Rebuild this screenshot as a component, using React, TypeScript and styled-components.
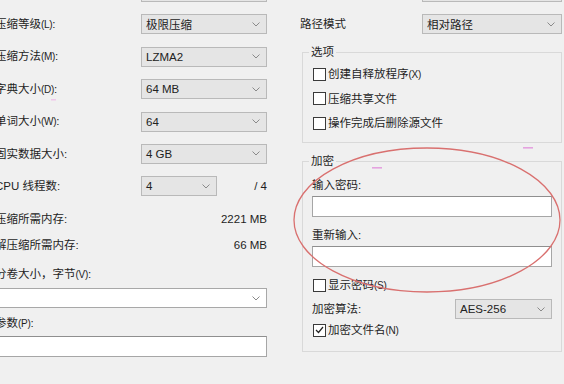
import { FC } from 'react';

import styled, { createGlobalStyle } from 'styled-components';

const GlobalStyle = createGlobalStyle`
  html, body {
    margin: 0;
    padding: 0;
    background: #f0f0f0;
  }
  body {
    font-family: "Liberation Sans", "Noto Sans CJK SC", sans-serif;
    font-size: 11.5px;
    color: #1e1e1e;
  }
`;

const Window = styled.div`
  width: 564px;
  height: 384px;
  position: relative;
  overflow: hidden;
  background: #f0f0f0;
  display: flex;
  align-items: flex-start;
`;

const LeftColumn = styled.div`
  width: 272px;
  margin-left: -5px;
  margin-top: -18px;
  display: flex;
  flex-direction: column;
`;

const RightColumn = styled.div`
  width: 262px;
  margin-left: 33px;
  margin-top: -18px;
  display: flex;
  flex-direction: column;
`;

const ComboStack = styled.div`
  display: flex;
  flex-direction: column;
  gap: 12.4px;
`;

const Row = styled.div<{ $top?: number }>`
  display: flex;
  align-items: center;
  justify-content: space-between;
  height: 20px;
  margin-top: ${(p) => p.$top ?? 0}px;
`;

const TextRow = styled.div<{ $top?: number }>`
  display: flex;
  align-items: center;
  justify-content: space-between;
  height: 16px;
  line-height: 16px;
  margin-top: ${(p) => p.$top ?? 0}px;
  white-space: nowrap;
`;

const Label = styled.span`
  white-space: nowrap;
  line-height: 16px;
`;

// the mnemonic part, e.g. "(L)", is set a bit narrower as in the original dialog
const Key = styled.span`
  font-size: 10px;
  letter-spacing: -0.3px;
`;

const Combo = styled.div<{ $width: number; $white?: boolean }>`
  box-sizing: border-box;
  width: ${(p) => p.$width}px;
  height: 20px;
  flex: none;
  display: flex;
  align-items: center;
  justify-content: space-between;
  padding: 0 6px 0 4px;
  background: ${(p) => (p.$white ? '#ffffff' : '#e5e5e5')};
  border: 1px solid ${(p) => (p.$white ? '#a8a8a8' : '#b9b9b9')};
  color: #222;
  white-space: nowrap;
`;

const TextBox = styled.div<{ $top?: number }>`
  box-sizing: border-box;
  height: 21px;
  width: 100%;
  margin-top: ${(p) => p.$top ?? 0}px;
  background: #ffffff;
  border: 1px solid #a6a6a6;
  border-top-color: #8f8f8f;
`;

const GroupBox = styled.fieldset<{ $top: number; $padTop: number; $padBottom: number }>`
  box-sizing: border-box;
  width: 260px;
  margin: ${(p) => p.$top}px 0 0 2px;
  padding: ${(p) => p.$padTop}px 9px ${(p) => p.$padBottom}px 9px;
  border: 1px solid #d9d9d9;
  display: flex;
  flex-direction: column;
  min-width: 0;
`;

const Legend = styled.legend`
  margin-left: -3px;
  padding: 0 2px;
  line-height: 16px;
  height: 16px;
`;

const CheckRow = styled.label<{ $top?: number }>`
  display: flex;
  align-items: center;
  gap: 2px;
  height: 16px;
  line-height: 16px;
  margin-left: 1px;
  margin-top: ${(p) => p.$top ?? 0}px;
  white-space: nowrap;
`;

const Box = styled.span`
  box-sizing: border-box;
  width: 13px;
  height: 13px;
  flex: none;
  background: #ffffff;
  border: 1px solid #3a3a3a;
  display: flex;
  align-items: center;
  justify-content: center;
`;

const Overlay = styled.svg`
  position: absolute;
  left: 0;
  top: 0;
  pointer-events: none;
`;

const Chevron: FC = () => (
  <svg width="8" height="5" viewBox="0 0 8 5">
    <path d="M0.5 0.5 L4 4 L7.5 0.5" fill="none" stroke="#8a8a8a" strokeWidth="1" />
  </svg>
);

const Select: FC<{ width: number; value?: string; white?: boolean }> = ({ width, value, white }) => (
  <Combo $width={width} $white={white}>
    <span>{value}</span>
    <Chevron />
  </Combo>
);

const CheckBox: FC<{ text: string; mnemonic?: string; checked?: boolean; top?: number }> = ({
  text,
  mnemonic,
  checked,
  top,
}) => (
  <CheckRow $top={top}>
    <Box>
      {checked && (
        <svg width="9" height="8" viewBox="0 0 9 8">
          <path d="M1 4 L3.5 6.5 L8 1" fill="none" stroke="#222" strokeWidth="1.2" />
        </svg>
      )}
    </Box>
    <span>
      {text}
      {mnemonic && <Key>({mnemonic})</Key>}
    </span>
  </CheckRow>
);

const comboRows = [
  { label: '压缩等级', key: 'L', value: '极限压缩' },
  { label: '压缩方法', key: 'M', value: 'LZMA2' },
  { label: '字典大小', key: 'D', value: '64 MB' },
  { label: '单词大小', key: 'W', value: '64' },
  { label: '固实数据大小', key: '', value: '4 GB' },
];

const App: FC = () => (
  <>
    <GlobalStyle />
    <Window>
      <LeftColumn>
        <ComboStack>
          <Row>
            <span />
            <Select width={126} />
          </Row>
          {comboRows.map((r) => (
            <Row key={r.label}>
              <Label>
                {r.label}
                {r.key && <Key>({r.key})</Key>}:
              </Label>
              <Select width={126} value={r.value} />
            </Row>
          ))}
          <Row>
            <Label>CPU 线程数:</Label>
            <span style={{ flex: 1 }} />
            <Select width={76} value="4" />
            <Label style={{ width: 50, textAlign: 'right' }}>/ 4</Label>
          </Row>
        </ComboStack>
        <TextRow $top={15}>
          <Label>压缩所需内存:</Label>
          <Label>2221 MB</Label>
        </TextRow>
        <TextRow $top={10}>
          <Label>解压缩所需内存:</Label>
          <Label>66 MB</Label>
        </TextRow>
        <TextRow $top={13}>
          <Label>
            分卷大小，字节<Key>(V)</Key>:
          </Label>
        </TextRow>
        <Row $top={6}>
          <Select width={272} white />
        </Row>
        <TextRow $top={7}>
          <Label>
            参数<Key>(P)</Key>:
          </Label>
        </TextRow>
        <TextBox $top={5} />
      </LeftColumn>

      <RightColumn>
        <ComboStack>
          <Row>
            <span />
            <Select width={140} />
          </Row>
          <Row>
            <Label>路径模式</Label>
            <Select width={140} value="相对路径" />
          </Row>
        </ComboStack>

        <GroupBox $top={10} $padTop={6} $padBottom={11}>
          <Legend>选项</Legend>
          <CheckBox text="创建自释放程序" mnemonic="X" />
          <CheckBox text="压缩共享文件" top={8.5} />
          <CheckBox text="操作完成后删除源文件" top={8.5} />
        </GroupBox>

        <GroupBox $top={10} $padTop={8} $padBottom={13}>
          <Legend>加密</Legend>
          <TextRow>
            <Label>输入密码:</Label>
          </TextRow>
          <TextBox $top={3} />
          <TextRow $top={10}>
            <Label>重新输入:</Label>
          </TextRow>
          <TextBox $top={3} />
          <CheckBox text="显示密码" mnemonic="S" top={10} />
          <Row $top={6}>
            <Label>加密算法:</Label>
            <Select width={97} value="AES-256" />
          </Row>
          <CheckBox text="加密文件名" mnemonic="N" checked top={3} />
        </GroupBox>
      </RightColumn>

      <Overlay width="564" height="384" viewBox="0 0 564 384">
        <ellipse cx="427" cy="220" rx="133" ry="72" fill="none" stroke="#d9706f" strokeWidth="1.3" />
        <rect x="523" y="147" width="10" height="1.6" fill="#e4a3df" />
        <rect x="372" y="167" width="10" height="1.6" fill="#e4a3df" />
        <rect x="51" y="99" width="5" height="1.5" fill="#efc6ea" />
      </Overlay>
    </Window>
  </>
);

export default App;
